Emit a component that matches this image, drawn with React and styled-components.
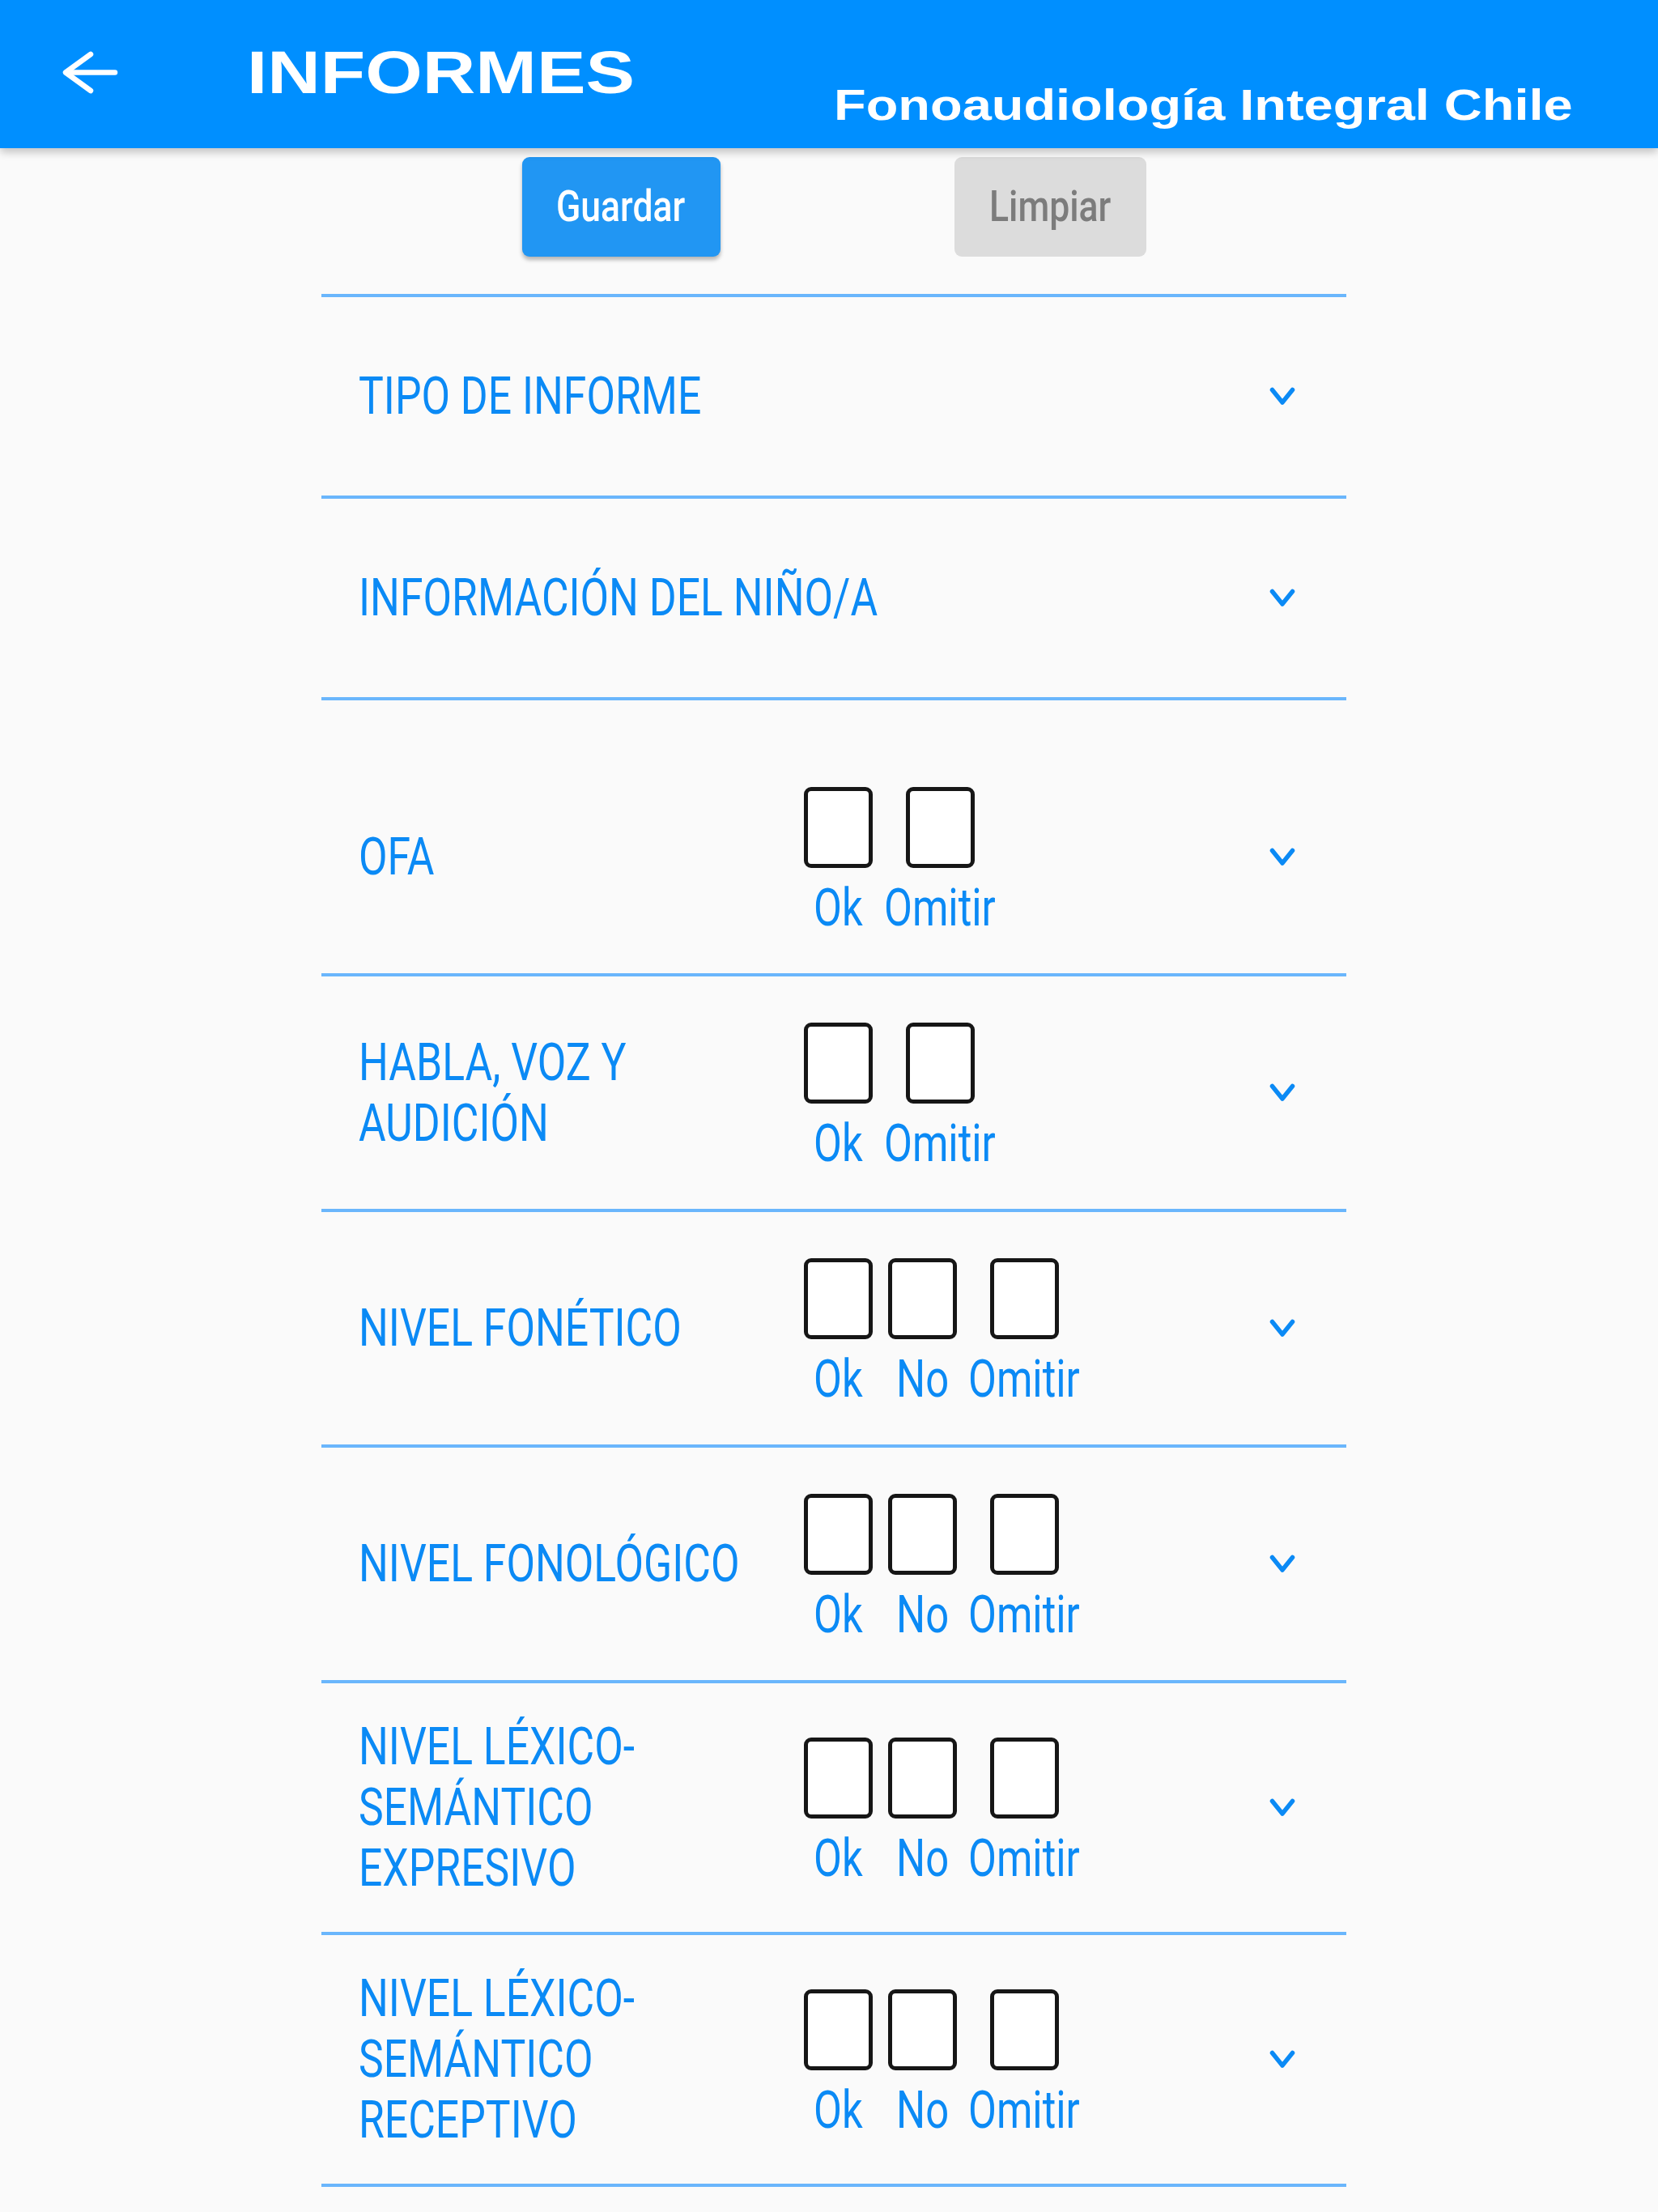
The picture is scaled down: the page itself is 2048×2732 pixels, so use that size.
import React, { useLayoutEffect, useRef, useState } from 'react';
import styled, { createGlobalStyle } from 'styled-components';

const GlobalStyle = createGlobalStyle`
  *, *::before, *::after {
    box-sizing: border-box;
  }
  body {
    margin: 0;
    background: #fafafa;
    font-family: Roboto, 'Noto Sans', sans-serif;
  }
`;

// Page content
const sections = [
  { title: ['TIPO DE INFORME'] },
  { title: ['INFORMACIÓN DEL NIÑO/A'] },
  { title: ['OFA'], options: ['Ok', 'Omitir'], spaced: true },
  { title: ['HABLA, VOZ Y', 'AUDICIÓN'], options: ['Ok', 'Omitir'] },
  { title: ['NIVEL FONÉTICO'], options: ['Ok', 'No', 'Omitir'] },
  { title: ['NIVEL FONOLÓGICO'], options: ['Ok', 'No', 'Omitir'] },
  { title: ['NIVEL LÉXICO-', 'SEMÁNTICO', 'EXPRESIVO'], options: ['Ok', 'No', 'Omitir'] },
  { title: ['NIVEL LÉXICO-', 'SEMÁNTICO', 'RECEPTIVO'], options: ['Ok', 'No', 'Omitir'] },
];

const SqueezeBox = styled.span`
  display: inline-block;
  white-space: nowrap;
  vertical-align: top;
`;

const SqueezeInner = styled.span`
  display: inline-block;
  transform: scaleX(${({ $scale }) => $scale});
  transform-origin: left center;
`;

// text drawn narrower / wider than the font, keeping its visual width in layout
const Squeeze = ({ scale, children }) => {
  const inner = useRef(null);
  const [width, setWidth] = useState();

  useLayoutEffect(() => {
    if (inner.current) setWidth(inner.current.offsetWidth * scale);
  }, [scale, children]);

  return (
    <SqueezeBox style={{ width }}>
      <SqueezeInner ref={inner} $scale={scale}>
        {children}
      </SqueezeInner>
    </SqueezeBox>
  );
};

const SPage = styled.div`
  min-height: 2732px;
`;

const Header = styled.header`
  position: relative;
  z-index: 1;
  display: flex;
  align-items: flex-start;
  height: 183px;
  padding: 52px 105px 0 76px;
  background: #008fff;
  box-shadow: 0 5px 10px rgba(0, 0, 0, 0.22);
  color: #ffffff;
  font-family: 'Liberation Sans', Arial, sans-serif;
  font-weight: 700;
`;

const BackButton = styled.div`
  margin-top: 11px;
  width: 70px;
  height: 53px;
  svg {
    display: block;
  }
`;

const PageTitle = styled.div`
  margin-left: 159px;
  font-size: 75px;
  line-height: 1;
`;

const Brand = styled.div`
  margin-left: auto;
  margin-top: 51px;
  font-size: 53px;
  line-height: 1;
`;

const ButtonBar = styled.div`
  display: flex;
  justify-content: center;
  gap: 289px;
  padding: 11px 0 46px 12px;
`;

const Button = styled.div`
  display: flex;
  align-items: center;
  justify-content: center;
  width: ${({ $width }) => $width}px;
  height: 123px;
  border-radius: 9px;
  background: ${({ $primary }) => ($primary ? '#2196f3' : '#dcdcdc')};
  color: ${({ $primary }) => ($primary ? '#ffffff' : '#7c7c7c')};
  box-shadow: ${({ $primary }) => ($primary ? '0 4px 5px rgba(0, 0, 0, 0.28)' : 'none')};
  font-family: Roboto, sans-serif;
  font-weight: 500;
  font-size: 53px;
  line-height: 1;
`;

const List = styled.div`
  width: 1266px;
  margin-left: 397px;
  border-top: 4px solid #6ab6fc;
`;

const Row = styled.div`
  display: flex;
  align-items: center;
  min-height: ${({ $minHeight }) => $minHeight}px;
  margin-top: ${({ $offset }) => $offset}px;
  padding: 41px 63px 41px 46px;
  border-bottom: 4px solid #6ab6fc;
  color: #0b8af5;
  font-size: 65px;
  line-height: 75px;
`;

const RowTitle = styled.div`
  display: flex;
  flex-direction: column;
  flex: none;
  width: 545px;
`;

const Options = styled.div`
  display: flex;
  gap: 10px;
  padding: 16px 0 2px;
`;

const Option = styled.div`
  display: flex;
  flex-direction: column;
  align-items: center;
  min-width: 94px;
`;

const Box = styled.div`
  width: 85px;
  height: 100px;
  border: 5px solid #161616;
  border-radius: 9px;
  background: #ffffff;
`;

const OptionLabel = styled.div`
  margin-top: 12px;
`;

const Chevron = styled.div`
  margin-left: auto;
  width: 32px;
  height: 23px;
  svg {
    display: block;
  }
`;

const ArrowIcon = () => (
  <svg width='70' height='53' viewBox='0 0 70 53' fill='none'>
    <path d='M66 26.5H6' stroke='#fff' strokeWidth='6.5' strokeLinecap='round' />
    <path d='M36 4L5 26.5L36 49' stroke='#fff' strokeWidth='6.5' strokeLinecap='round' strokeLinejoin='round' />
  </svg>
);

const ChevronIcon = () => (
  <svg width='32' height='23' viewBox='0 0 32 23' fill='none'>
    <path d='M3.5 3.5L16 19L28.5 3.5' stroke='#0b8af5' strokeWidth='5.5' strokeLinecap='round' strokeLinejoin='round' />
  </svg>
);

const Section = ({ title, options, spaced }) => (
  <Row $minHeight={options ? 0 : 249} $offset={spaced ? 50 : 0}>
    <RowTitle>
      {title.map((line, i) => (
        <div key={i}>
          <Squeeze scale={0.795}>{line}</Squeeze>
        </div>
      ))}
    </RowTitle>
    {options && (
      <Options>
        {options.map((opt) => (
          <Option key={opt}>
            <Box />
            <OptionLabel>
              <Squeeze scale={0.78}>{opt}</Squeeze>
            </OptionLabel>
          </Option>
        ))}
      </Options>
    )}
    <Chevron>
      <ChevronIcon />
    </Chevron>
  </Row>
);

const App = () => {
  return (
    <SPage>
      <GlobalStyle />
      <Header>
        <BackButton>
          <ArrowIcon />
        </BackButton>
        <PageTitle>
          <Squeeze scale={1.21}>INFORMES</Squeeze>
        </PageTitle>
        <Brand>
          <Squeeze scale={1.225}>Fonoaudiología Integral Chile</Squeeze>
        </Brand>
      </Header>
      <ButtonBar>
        <Button $primary $width={245}>
          <Squeeze scale={0.84}>Guardar</Squeeze>
        </Button>
        <Button $width={237}>
          <Squeeze scale={0.84}>Limpiar</Squeeze>
        </Button>
      </ButtonBar>
      <List>
        {sections.map((s, i) => (
          <Section key={i} {...s} />
        ))}
      </List>
    </SPage>
  );
};

export default App;
